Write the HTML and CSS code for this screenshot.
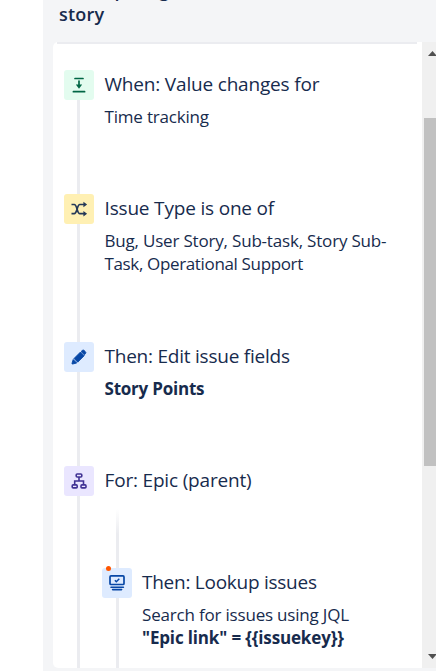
FILE: index.html
```html
<!DOCTYPE html>
<html lang="en">
<head>
<meta charset="utf-8">
<title>Automation rule</title>
<link rel="stylesheet" href="styles.css">
</head>
<body>
<main class="sidebar">
  <header class="rule-title"><span>Sum up long</span><span>story</span></header>
  <div class="viewport">
    <section class="panel">
      <div class="step trigger">
        <div class="rail"><div class="icon green"><svg viewBox="0 0 30 30"><path d="M11 8.5h8M9.4 21.7h11.2M15 11v5" fill="none" stroke="#006644" stroke-width="1.7" stroke-linecap="round"/><path d="M11.8 14.5h6.4L15 18.7z" fill="#006644"/></svg></div></div>
        <div class="body"><h2 class="t1">When: Value changes for</h2><p class="p1">Time tracking</p></div>
      </div>
      <div class="step condition">
        <div class="rail"><div class="icon yellow"><svg viewBox="0 0 30 30"><path d="M7.5 10.5h2.7c3 0 2.8 9.2 5.6 9.2H20.5M7.5 19.7h2.7c3 0 2.8-9.2 5.6-9.2H20.5" fill="none" stroke="#253858" stroke-width="1.7"/><path d="M19.4 7.7l3.7 2.8-3.7 2.8zM19.4 16.9l3.7 2.8-3.7 2.8z" fill="#253858"/></svg></div></div>
        <div class="body"><h2 class="t2">Issue Type is one of</h2><p class="p2">Bug, User Story, Sub-task, Story Sub-</p><p class="p3">Task, Operational Support</p></div>
      </div>
      <div class="step action">
        <div class="rail"><div class="icon blue"><svg viewBox="0 0 30 30"><path d="M10 16.5l6.5-6.5 3.7 3.7-6.5 6.5zM17.2 9.4l1-.9q1-1 2 0l1.2 1.2q1 1 0 2l-.9 1zM9.2 17.5l3.5 3.5-4 1q-.9.2-.7-.7z" fill="#0747a6" stroke="#0747a6" stroke-width=".9" stroke-linejoin="round"/></svg></div></div>
        <div class="body"><h2 class="t3">Then: Edit issue fields</h2><p class="p4"><b>Story Points</b></p></div>
      </div>
      <div class="step branch">
        <div class="rail"><div class="icon purple"><svg viewBox="0 0 30 30"><g fill="none" stroke="#403294" stroke-width="1.6"><rect x="12.2" y="8" width="5.6" height="3" rx="1"/><rect x="8.2" y="18.9" width="5" height="3" rx="1"/><rect x="17" y="18.9" width="5" height="3" rx="1"/><path d="M15 11v4M10.7 19v-4h8.8v4"/></g></svg></div></div>
        <div class="body">
          <h2 class="t4">For: Epic (parent)</h2>
          <div class="step nested">
            <div class="rail"><div class="icon blue"><i class="dot"></i><svg viewBox="0 0 30 30"><g fill="none" stroke="#0747a6"><rect x="8" y="7.9" width="14" height="8.6" rx="1" stroke-width="1.7"/><path d="M12.9 12.3l1.4 1.4 3-3" stroke-width="1.5"/><path d="M9 19.2h12.4M10.6 21.6h9" stroke-width="1.6" stroke-linecap="round"/></g></svg></div></div>
            <div class="body"><h2 class="t5">Then: Lookup issues</h2><p class="p5">Search for issues using JQL</p><p class="p6"><b>"Epic link" = {{issuekey}}</b></p></div>
          </div>
        </div>
      </div>
    </section>
    <div class="scrollbar"><svg class="arrow" viewBox="0 0 8 5"><path d="M0 5L4.5 0 9 5z"/></svg><div class="thumb"></div><svg class="arrow" viewBox="0 0 8 5"><path d="M0 0h9L4.5 5z"/></svg></div>
  </div>
</main>
</body>
</html>
```
FILE: styles.css
```css
* { box-sizing: border-box; }
body { margin: 0; height: 671px; overflow: hidden; background: #fff; color: #172b4d; font-family: "Open Sans", "Noto Sans", sans-serif; }
.sidebar { height: 671px; margin-left: 43px; background: #f4f5f7; overflow: hidden; }
.rule-title { height: 42px; padding-left: 16px; display: flex; flex-direction: column; justify-content: flex-end; padding-bottom: 16px; font-size: 18px; line-height: 24px; font-weight: 600; letter-spacing: .2px; overflow: hidden; }
.viewport { height: 626px; margin-left: 10px; display: flex; }
.panel { width: 369px; flex: none; padding: 26px 0 0 11px; background: linear-gradient(#ebecf0, #ebecf0) 4px 0 / 360px 2px no-repeat #fff; border-radius: 5px 0 0 5px; overflow: hidden; }
.step { display: flex; height: 124px; }
.condition { height: 148px; }
.branch { height: 220px; }
.rail { width: 30px; flex: none; background: linear-gradient(#ebecf0, #ebecf0) 13px 0 / 3px 100% no-repeat; }
.trigger .rail { background-position: 13px 20px; }
.icon { position: relative; width: 30px; height: 30px; margin-top: 2px; border-radius: 3px; }
.icon svg { display: block; width: 30px; height: 30px; }
.green { background: #e3fcef; }
.yellow { background: #fff0b3; }
.blue { background: #deebff; }
.purple { background: #eae6ff; }
.body { margin-left: 10.5px; white-space: nowrap; }
h2 { margin: 0 0 5px; padding-top: 2px; font-size: 19px; line-height: 28px; font-weight: 400; height: 32px; letter-spacing: -.18px; }
p { margin: 0; font-size: 17px; line-height: 23px; letter-spacing: -.19px; }
.t3 { letter-spacing: -.23px; }
.t5 { letter-spacing: -.26px; }
.p3 { letter-spacing: -.35px; }
.p4 { letter-spacing: -.22px; }
.p6 { letter-spacing: -.15px; }
.nested { margin: 13px 0 0 -2.5px; height: 170px; }
.nested > .rail { background: linear-gradient(#fff, #ebecf0 25px) 14px 0 / 3px 100% no-repeat; padding-top: 57px; }
.nested > .body { padding-top: 57px; margin-left: 10px; }
.dot { position: absolute; left: 3.5px; top: -2.5px; width: 5px; height: 5px; border-radius: 50%; background: #ff5600; }
.scrollbar { flex: 1; background: #f0f0f0; padding: 9px 0 9px 2px; display: flex; flex-direction: column; }
.arrow { width: 8px; height: 5px; margin-left: 4px; fill: #505050; flex: none; }
.thumb { height: 348px; margin: 62px 0 auto; background: #c1c1c1; }
```
